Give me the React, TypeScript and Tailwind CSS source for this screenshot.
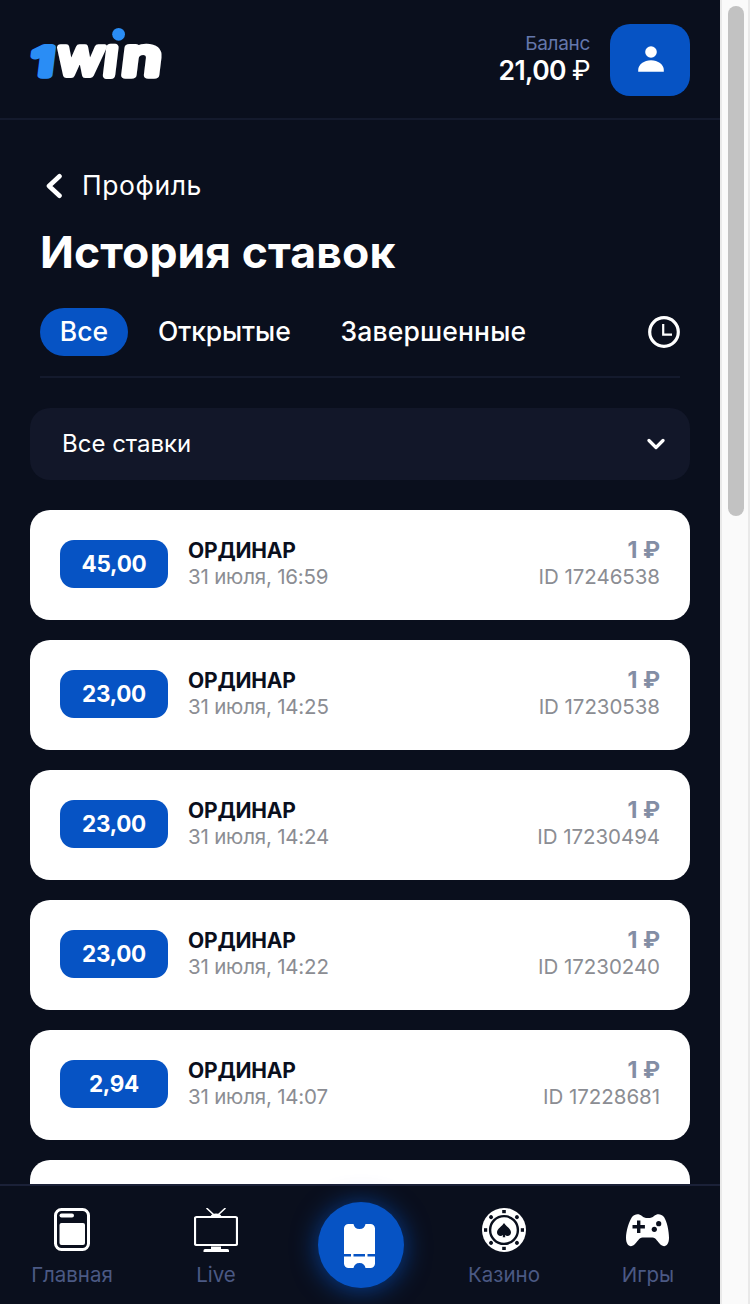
import type { ReactNode } from "react";

type Bet = { odds: string; date: string; id: string };

const bets: Bet[] = [
  { odds: "45,00", date: "31 июля, 16:59", id: "17246538" },
  { odds: "23,00", date: "31 июля, 14:25", id: "17230538" },
  { odds: "23,00", date: "31 июля, 14:24", id: "17230494" },
  { odds: "23,00", date: "31 июля, 14:22", id: "17230240" },
  { odds: "2,94", date: "31 июля, 14:07", id: "17228681" },
];

function Logo() {
  return (
    <svg className="h-[60px] w-[140px] overflow-visible" viewBox="26 24 140 60" aria-label="1win">
      <g fill="#fff" stroke="#fff" strokeWidth="6" strokeLinejoin="round" fontFamily="Inter, sans-serif" fontWeight="400">
        <text transform="translate(55 75) skewX(-7)" fontSize="51" textLength="47" lengthAdjust="spacingAndGlyphs">w</text>
        <text transform="translate(103 74.500) skewX(-7)" fontSize="50" strokeWidth="8">ı</text>
        <text transform="translate(121 74.500) skewX(-7)" fontSize="50" textLength="38.500" lengthAdjust="spacingAndGlyphs" strokeWidth="7.500">n</text>
      </g>
      <text transform="translate(31 74.500) skewX(-7)" fontSize="37.500" textLength="21" lengthAdjust="spacingAndGlyphs" fill="#2a8df5" stroke="#2a8df5" strokeWidth="7.500" strokeLinejoin="round" fontFamily="Inter, sans-serif" fontWeight="400">1</text>
      <circle cx="118.6" cy="34.3" r="6.4" fill="#2a8df5" />
    </svg>
  );
}

function Header() {
  return (
    <header className="flex h-[120px] shrink-0 items-start justify-between border-b-2 border-[#141a2d] pr-[30px] pl-[26px] pt-6">
      <Logo />
      <div className="flex gap-5">
        <div className="flex flex-col items-end pt-2">
          <span className="text-[19px] leading-6 tracking-[-0.3px] text-[#6477ac]">Баланс</span>
          <span className="text-[26.5px] leading-[29px] font-semibold tracking-[-0.6px] text-white">
            21,00 <span className="font-normal">₽</span>
          </span>
        </div>
        <button className="flex h-[72px] w-20 justify-center rounded-[20px] bg-[#0653c4] pt-[22px] pl-[2px]">
          <svg className="h-[26px] w-[26px]" viewBox="0 0 26 26" fill="#fff">
            <circle cx="13" cy="6" r="5.8" />
            <path d="M0.2 25.7V24C0.2 18.500 6 14.200 13 14.200S25.800 18.500 25.800 24V25.700Z" />
          </svg>
        </button>
      </div>
    </header>
  );
}

function BetCard({ bet }: { bet: Bet }) {
  return (
    <article className="flex h-[110px] shrink-0 items-start rounded-[20px] bg-white px-[30px] pt-[26px]">
      <div className="mt-1 flex h-12 w-[108px] items-center justify-center rounded-[14px] bg-[#0653c4] text-[22.5px] font-bold tracking-[-0.3px] text-white">
        {bet.odds}
      </div>
      <div className="ml-5 flex flex-col pt-px">
        <span className="text-[21px] leading-[28px] font-bold tracking-[-0.2px] text-[#0a0f1d]">ОРДИНАР</span>
        <span className="text-[20.5px] leading-6 tracking-[-0.2px] text-[#8b8d93]">{bet.date}</span>
      </div>
      <div className="ml-auto flex flex-col items-end">
        <span className="text-[23px] leading-[28px] font-bold text-[#838ea5]">1 ₽</span>
        <span className="mt-px text-[20.5px] leading-6 tracking-[-0.05px] text-[#8b8d93]">ID {bet.id}</span>
      </div>
    </article>
  );
}

function HomeIcon() {
  return (
    <svg className="h-11 w-11" viewBox="0 0 44 44" fill="none">
      <rect x="5.500" y="1.500" width="33" height="40" rx="6" stroke="#fff" strokeWidth="3" />
      <rect x="9.500" y="5.500" width="14.500" height="4" rx="2" fill="#fff" />
      <rect x="9.500" y="15" width="25.500" height="22" rx="2" fill="#fff" />
    </svg>
  );
}

function TvIcon() {
  return (
    <svg className="h-11 w-11" viewBox="0 0 44 44" fill="none">
      <path d="M13 0.500L19.500 6.500M31 0.500L24.500 6.500" stroke="#fff" strokeWidth="1.600" strokeLinecap="round" />
      <path d="M16.500 8.500C17 6.500 19 5.500 22 5.500S27 6.500 27.500 8.500Z" fill="#fff" />
      <rect x="1" y="9" width="42" height="28" rx="1.500" stroke="#fff" strokeWidth="2.200" />
      <path d="M17 38.500H27V41H33.500A1.500 1.500 0 0 1 35 42.500V44H9.500V42.500A1.500 1.500 0 0 1 11 41H17Z" fill="#fff" />
    </svg>
  );
}

function ChipIcon() {
  return (
    <svg className="h-11 w-11" viewBox="0 0 44 44">
      <circle cx="22" cy="22" r="22" fill="#fff" />
      <g fill="#0a0f1d">
        {[0, 90, 180, 270].map((a) => (
          <rect key={a} x="20.200" y="2" width="3.600" height="3.200" transform={`rotate(${a} 22 22)`} />
        ))}
        {[45, 135, 225, 315].map((a) => (
          <circle key={a} cx="22" cy="3.700" r="2" transform={`rotate(${a} 22 22)`} />
        ))}
        <path d="M22 15C23.500 18 29 20.500 29 24.500C29 27.800 25 29.200 22.900 26.900L23.300 29.200H20.700L21.100 26.900C19 29.200 15 27.800 15 24.500C15 20.500 20.500 18 22 15Z" />
      </g>
      <circle cx="22" cy="22" r="13.900" fill="none" stroke="#0a0f1d" strokeWidth="2.400" />
    </svg>
  );
}

function GamepadIcon() {
  return (
    <svg className="h-11 w-11" viewBox="0 0 44 44">
      <path
        d="M6 9C9 5.500 13 5.500 16 8C17.500 9.400 19 10 22 10S26.500 9.400 28 8C31 5.500 35 5.500 38 9C41 13.500 43 23 43 30C43 37 39 40 35 37C31.500 34 30 29.500 26.500 29.500H16.500C13 29.500 11.500 34 8 37C4 40 0 37 0 30C0 23 3 13.500 6 9Z"
        fill="#fff"
      />
      <path d="M12.700 12.500V25M6.500 18.700H18.900" stroke="#0a0f1d" strokeWidth="3.400" />
      <circle cx="28.300" cy="21.300" r="2.600" fill="#0a0f1d" />
      <circle cx="32.700" cy="15.700" r="2.600" fill="#0a0f1d" />
    </svg>
  );
}

function NavItem({ icon, children }: { icon: ReactNode; children: ReactNode }) {
  return (
    <a className="flex w-36 flex-col items-center pt-[22px] text-[20.5px] leading-6 text-[#4b5984]">
      {icon}
      <span className="mt-[11px]">{children}</span>
    </a>
  );
}

function BottomNav() {
  return (
    <nav className="flex h-[120px] shrink-0 border-t-2 border-[#1b2138] bg-[#0a0f1d]">
      <NavItem icon={<HomeIcon />}>Главная</NavItem>
      <NavItem icon={<TvIcon />}>Live</NavItem>
      <div className="flex w-36 justify-center pt-4 pl-[2px]">
        <button className="flex h-[86px] w-[86px] justify-center rounded-full bg-[#0653c4] pt-[22px] pr-1 shadow-[0_2px_26px_rgba(6,83,196,0.7)]">
          <svg className="h-11 w-[31px]" viewBox="0 0 31 44">
            <path
              d="M4.500 0H9.500C10 3 12 5 15.500 5S21 3 21.500 0H26.500A4.500 4.500 0 0 1 31 4.500V39.500A4.500 4.500 0 0 1 26.500 44H21.500C21 41 19 39 15.500 39S10 41 9.500 44H4.500A4.500 4.500 0 0 1 0 39.500V4.500A4.500 4.500 0 0 1 4.500 0Z"
              fill="#fff"
            />
            <path d="M0 31.200H7M9.500 31.200H21M23.500 31.200H31" stroke="#0653c4" strokeWidth="2.600" />
          </svg>
        </button>
      </div>
      <NavItem icon={<ChipIcon />}>Казино</NavItem>
      <NavItem icon={<GamepadIcon />}>Игры</NavItem>
    </nav>
  );
}

export default function App() {
  return (
    <div className="flex h-[1304px] w-[750px] overflow-hidden bg-[#fafafa] font-['Inter','Noto_Sans',sans-serif]">
      <div className="flex w-[720px] flex-col bg-[#0a0f1d]">
        <Header />
        <main className="flex min-h-0 flex-1 flex-col overflow-hidden">
          <section className="mx-10 flex h-[258px] shrink-0 flex-col border-b-2 border-[#141a2d] pt-[49px]">
            <a className="flex h-8 items-center text-[26.5px] leading-8 tracking-[0.6px] text-white">
              <svg className="mt-[2px] mr-[19px] ml-[5px] h-[26px] w-[18px]" viewBox="0 0 18 26" fill="none">
                <path d="M14.500 3.200L4 13L14.500 22.800" stroke="#fff" strokeWidth="4.600" strokeLinecap="round" strokeLinejoin="round" />
              </svg>
              Профиль
            </a>
            <h1 className="mt-[23px] h-[56px] text-[44.5px] leading-[56px] font-bold tracking-[0.1px] text-white">История ставок</h1>
            <div className="mt-7 flex h-12 items-center text-[26.5px] font-medium text-white">
              <button className="h-12 w-[88px] rounded-3xl bg-[#0653c4]">Все</button>
              <button className="ml-[30px] tracking-[-0.1px]">Открытые</button>
              <button className="ml-[50px] tracking-[0.15px]">Завершенные</button>
              <svg className="ml-auto h-8 w-8" viewBox="0 0 32 32" fill="none" stroke="#fff">
                <circle cx="16" cy="16" r="14.300" strokeWidth="3.200" />
                <path d="M15.200 8V18.700H24" strokeWidth="2.200" />
              </svg>
            </div>
          </section>
          <button className="mx-[30px] mt-[30px] flex h-[72px] shrink-0 items-center justify-between rounded-[20px] bg-[#121729] pr-[25px] pl-8 text-[24px] text-white">
            <span>Все ставки</span>
            <svg className="h-[12px] w-[18px]" viewBox="0 0 18 12" fill="none">
              <path d="M2 2.500L9 9.500L16 2.500" stroke="#fff" strokeWidth="3.200" strokeLinecap="round" strokeLinejoin="round" />
            </svg>
          </button>
          <div className="mx-[30px] mt-[30px] flex flex-col gap-5">
            {bets.map((b) => (
              <BetCard key={b.id} bet={b} />
            ))}
            <div className="h-[110px] shrink-0 rounded-[20px] bg-white" />
          </div>
        </main>
        <BottomNav />
      </div>
      <div className="flex w-[30px] justify-center border-x-2 border-[#e9e9e9] bg-[#fafafa] pt-[6px] pl-[2px]">
        <div className="h-[510px] w-4 rounded-full bg-[#c2c2c2]" />
      </div>
    </div>
  );
}
